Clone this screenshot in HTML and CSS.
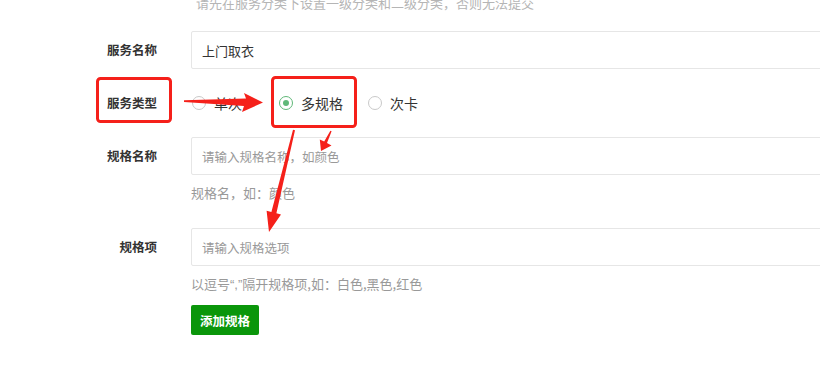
FILE: index.html
```html
<!DOCTYPE html>
<html lang="zh-CN">
<head>
    <meta charset="UTF-8">
    <title>服务规格</title>
    <link rel="stylesheet" href="styles.css">
</head>
<body>

<div class="page">
    <div class="form-item tip-row">
        <div class="form-label"></div>
        <div class="form-block">
            <div class="tip">请先在服务分类下设置一级分类和二级分类，否则无法提交</div>
        </div>
    </div>

    <div class="form-item">
        <label class="form-label">服务名称</label>
        <div class="form-block">
            <input type="text" class="input" value="上门取衣">
        </div>
    </div>

    <div class="form-item">
        <label class="form-label">服务类型</label>
        <div class="form-block radios">
            <span class="radio radio-single"><i class="dot"></i>单次</span>
            <span class="radio radio-multi checked"><i class="dot"></i>多规格</span>
            <span class="radio"><i class="dot"></i>次卡</span>
        </div>
    </div>

    <div class="form-item">
        <label class="form-label">规格名称</label>
        <div class="form-block">
            <input type="text" class="input" placeholder="请输入规格名称，如颜色">
            <div class="help">规格名，如：颜色</div>
        </div>
    </div>

    <div class="form-item">
        <label class="form-label">规格项</label>
        <div class="form-block">
            <input type="text" class="input" placeholder="请输入规格选项">
            <div class="help">以逗号<span class="latin">“,”</span>隔开规格项,如：白色,黑色,红色</div>
            <button class="btn">添加规格</button>
        </div>
    </div>

    <!-- annotation marks drawn over the form -->
    <svg class="marks" width="820" height="379" viewBox="0 0 820 379">
        <rect x="97.5" y="78.5" width="73" height="43" rx="3" fill="none" stroke="#f5201a" stroke-width="3"/>
        <rect x="272.5" y="77.5" width="83" height="49" rx="3" fill="none" stroke="#f5201a" stroke-width="3"/>
        <polygon fill="#f5201a" points="184,100.3 246,98.5 244,93 263,102.5 242,112 244,106 184,102"/>
        <polygon fill="#f5201a" points="295,130.2 276.4,213.2 281,214.4 269,232 266.6,210.8 271.4,212 293,129.8"/>
        <polygon fill="#f5201a" points="331.6,131.3 327,143 331.5,145.5 321,151 319.8,139.5 324.2,141.6 330.4,130.7"/>
    </svg>
</div>

</body>
</html>
```

FILE: styles.css
```css
body {
    margin: 0;
    background-color: #fff;
    font-family: "Noto Sans CJK SC", "Noto Sans", sans-serif;
    color: #333;
    overflow: hidden;
}

.page {
    position: relative;
    width: 820px;
    height: 379px;
    overflow: hidden;
}

.form-item {
    display: flex;
    align-items: flex-start;
    margin-bottom: 15px;
}

.form-label {
    width: 157px;
    flex-shrink: 0;
    margin-right: 34px;
    height: 38px;
    line-height: 38px;
    text-align: right;
    font-size: 12.5px;
    font-weight: bold;
    color: #333;
}

.form-block {
    width: 660px;
    flex-shrink: 0;
}

.tip-row {
    margin-top: -7px;
    margin-bottom: 18px;
}

.tip-row .form-label {
    height: 20px;
}

.tip {
    padding-left: 5px;
    line-height: 20px;
    font-size: 13px;
    color: #b5b5b5;
}

.input {
    display: block;
    box-sizing: border-box;
    width: 100%;
    height: 38px;
    padding: 0 10px;
    border: 1px solid #e6e6e6;
    border-radius: 2px;
    font-family: inherit;
    font-size: 13px;
    color: #333;
    outline: none;
}

.input::placeholder {
    color: #999;
    font-size: 12.5px;
}

.radios {
    display: flex;
    align-items: center;
    height: 38px;
}

.radio {
    display: flex;
    align-items: center;
    font-size: 14px;
    color: #333;
    margin-left: 1px;
}

.radio-single {
    margin-right: 36px;
}

.radio-multi {
    margin-right: 24px;
}

.dot {
    box-sizing: border-box;
    width: 14px;
    height: 14px;
    margin-right: 8px;
    border: 1px solid #c9c9c9;
    border-radius: 50%;
    position: relative;
}

.checked .dot {
    border-color: #5fb878;
}

.checked .dot::after {
    content: "";
    position: absolute;
    left: 3px;
    top: 3px;
    width: 6px;
    height: 6px;
    border-radius: 50%;
    background-color: #5fb878;
}

.help {
    margin: 8px 0 10px;
    line-height: 20px;
    font-size: 13px;
    color: #999;
}

.help .latin {
    font-family: "Liberation Sans", Arial, sans-serif;
}

.btn {
    display: block;
    width: 68px;
    height: 30px;
    padding: 0;
    border: none;
    border-radius: 2px;
    background-color: #0a960a;
    color: #fff;
    font-family: inherit;
    font-size: 12.5px;
    font-weight: bold;
    cursor: pointer;
}

.marks {
    position: absolute;
    left: 0;
    top: 0;
    pointer-events: none;
}
```
